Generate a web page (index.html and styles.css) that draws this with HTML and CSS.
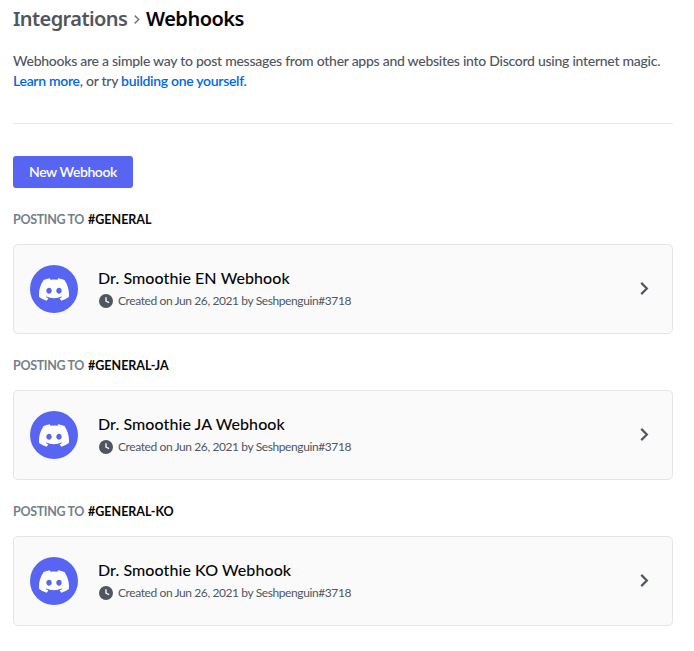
FILE: index.html
```html
<!DOCTYPE html>
<html lang="en">
<head>
<meta charset="utf-8">
<title>Webhooks</title>
<link rel="stylesheet" href="styles.css">
</head>
<body>
<svg class="sprite" aria-hidden="true">
  <symbol id="logo" viewBox="0 0 127.14 96.36"><path fill="currentColor" d="M107.7,8.07A105.15,105.15,0,0,0,81.47,0a72.06,72.06,0,0,0-3.36,6.83A97.68,97.68,0,0,0,49,6.83,72.37,72.37,0,0,0,45.64,0,105.89,105.89,0,0,0,19.39,8.09C2.79,32.65-1.71,56.6.54,80.21h0A105.73,105.73,0,0,0,32.71,96.36,77.7,77.7,0,0,0,39.6,85.25a68.42,68.42,0,0,1-10.85-5.18c.91-.66,1.8-1.34,2.66-2a75.57,75.57,0,0,0,64.32,0c.87.71,1.76,1.39,2.66,2a68.68,68.68,0,0,1-10.87,5.19,77,77,0,0,0,6.89,11.1A105.25,105.25,0,0,0,126.6,80.22h0C129.24,52.84,122.09,29.11,107.7,8.07ZM42.45,65.69C36.18,65.69,31,60,31,53s5-12.74,11.43-12.74S54,46,53.89,53,48.84,65.69,42.45,65.69Zm42.24,0C78.41,65.69,73.25,60,73.25,53s5-12.74,11.44-12.74S96.23,46,96.12,53,91.08,65.69,84.69,65.69Z"/></symbol>
  <symbol id="clock" viewBox="0 0 14 14"><path fill="currentColor" fill-rule="evenodd" d="M7 0a7 7 0 1 1 0 14A7 7 0 0 1 7 0ZM6.3 3.2V7.6L9.9 9.2L10.4 8L7.7 6.8V3.2Z"/></symbol>
  <symbol id="chevron" viewBox="0 0 8 12"><path fill="none" stroke="currentColor" stroke-width="2" d="M1 .8L6.2 6L1 11.2"/></symbol>
</svg>
<main class="page">
  <h1 class="breadcrumb">
    <span class="crumb crumb-parent">Integrations</span>
    <svg class="crumb-arrow"><use href="#chevron"/></svg>
    <span class="crumb crumb-current">Webhooks</span>
  </h1>
  <p class="description"><span class="intro">Webhooks are a simple way to post messages from other apps and websites into Discord using internet magic.</span><br><a class="link learn">Learn more</a><span class="or">, or try </span><a class="link build">building one yourself.</a></p>
  <hr class="divider">
  <button class="new-button"><span>New Webhook</span></button>

  <section class="group">
    <h2 class="group-title"><span class="posting">Posting to</span> <span class="channel">#general</span></h2>
    <div class="card">
      <div class="avatar"><svg class="logo"><use href="#logo"/></svg></div>
      <div class="info">
        <div class="name">Dr. Smoothie EN Webhook</div>
        <div class="meta"><svg class="clock"><use href="#clock"/></svg><span>Created on Jun 26, 2021 by Seshpenguin#3718</span></div>
      </div>
      <svg class="chevron"><use href="#chevron"/></svg>
    </div>
  </section>

  <section class="group">
    <h2 class="group-title"><span class="posting">Posting to</span> <span class="channel">#general-ja</span></h2>
    <div class="card">
      <div class="avatar"><svg class="logo"><use href="#logo"/></svg></div>
      <div class="info">
        <div class="name">Dr. Smoothie JA Webhook</div>
        <div class="meta"><svg class="clock"><use href="#clock"/></svg><span>Created on Jun 26, 2021 by Seshpenguin#3718</span></div>
      </div>
      <svg class="chevron"><use href="#chevron"/></svg>
    </div>
  </section>

  <section class="group">
    <h2 class="group-title"><span class="posting">Posting to</span> <span class="channel">#general-ko</span></h2>
    <div class="card">
      <div class="avatar"><svg class="logo"><use href="#logo"/></svg></div>
      <div class="info">
        <div class="name">Dr. Smoothie KO Webhook</div>
        <div class="meta"><svg class="clock"><use href="#clock"/></svg><span>Created on Jun 26, 2021 by Seshpenguin#3718</span></div>
      </div>
      <svg class="chevron"><use href="#chevron"/></svg>
    </div>
  </section>
</main>
</body>
</html>
```
FILE: styles.css
```css
* { box-sizing: border-box; }
body {
  margin: 0;
  background: #fff;
  color: #4f5660;
  font-family: Lato, "Noto Sans", sans-serif;
}
.sprite { display: none; }
.page { width: 660px; margin-left: 13px; padding-top: 7px; }
.breadcrumb {
  display: flex;
  align-items: center;
  margin: 0;
  height: 24px;
  font-family: "Noto Sans", sans-serif;
  font-size: 20px;
  line-height: 24px;
  font-weight: 600;
  white-space: nowrap;
}
.crumb-parent { width: 114px; letter-spacing: -0.58px; }
.crumb-arrow { width: 6px; height: 9px; margin: 0 6px 0 7px; color: #72767d; }
.crumb-current { color: #060607; letter-spacing: -0.5px; }
.description {
  margin: 20px 0 0;
  height: 40px;
  font-size: 14px;
  line-height: 20px;
  font-weight: 500;
  letter-spacing: -0.265px;
  white-space: nowrap;
}
.link { color: #0068e0; font-weight: 600; letter-spacing: -0.3px; }
.divider { margin: 32px 0; border: 0; height: 1px; background: #e6e7e9; }
.new-button {
  display: flex;
  align-items: center;
  justify-content: center;
  width: 120px;
  height: 32px;
  padding: 0;
  border: 0;
  border-radius: 3px;
  background: #5865f2;
  color: #fff;
  font: 600 14px/16px Lato, "Noto Sans", sans-serif;
  letter-spacing: -0.4px;
  white-space: nowrap;
}
.group { margin-top: 24px; }
.group-title {
  display: flex;
  margin: 0 0 16px;
  height: 16px;
  font-size: 12.5px;
  line-height: 16px;
  font-weight: 700;
  color: #747f8d;
  text-transform: uppercase;
  white-space: nowrap;
}
.posting { width: 75px; letter-spacing: -0.35px; }
.channel { color: #060607; letter-spacing: 0; }
.card {
  display: flex;
  align-items: center;
  height: 90px;
  padding: 0 23px 0 16px;
  border: 1px solid #e3e5e8;
  border-radius: 5px;
  background: #fafafa;
}
.avatar {
  display: flex;
  align-items: center;
  justify-content: center;
  width: 48px;
  height: 48px;
  border-radius: 50%;
  background: #5865f2;
  color: #fff;
}
.logo { width: 30px; height: 23px; }
.info { flex: 1; margin-left: 20px; }
.name {
  height: 20px;
  color: #060607;
  font-size: 16px;
  line-height: 18px;
  font-weight: 500;
  letter-spacing: 0.08px;
}
.meta {
  display: flex;
  align-items: center;
  height: 16px;
  margin-top: 4px;
  font-size: 12px;
  line-height: 16px;
  letter-spacing: -0.4px;
}
.clock { width: 14px; height: 14px; margin: 0 5px 0 1px; }
.chevron { width: 9px; height: 13px; margin-bottom: 1px; color: #4f5660; }
```
